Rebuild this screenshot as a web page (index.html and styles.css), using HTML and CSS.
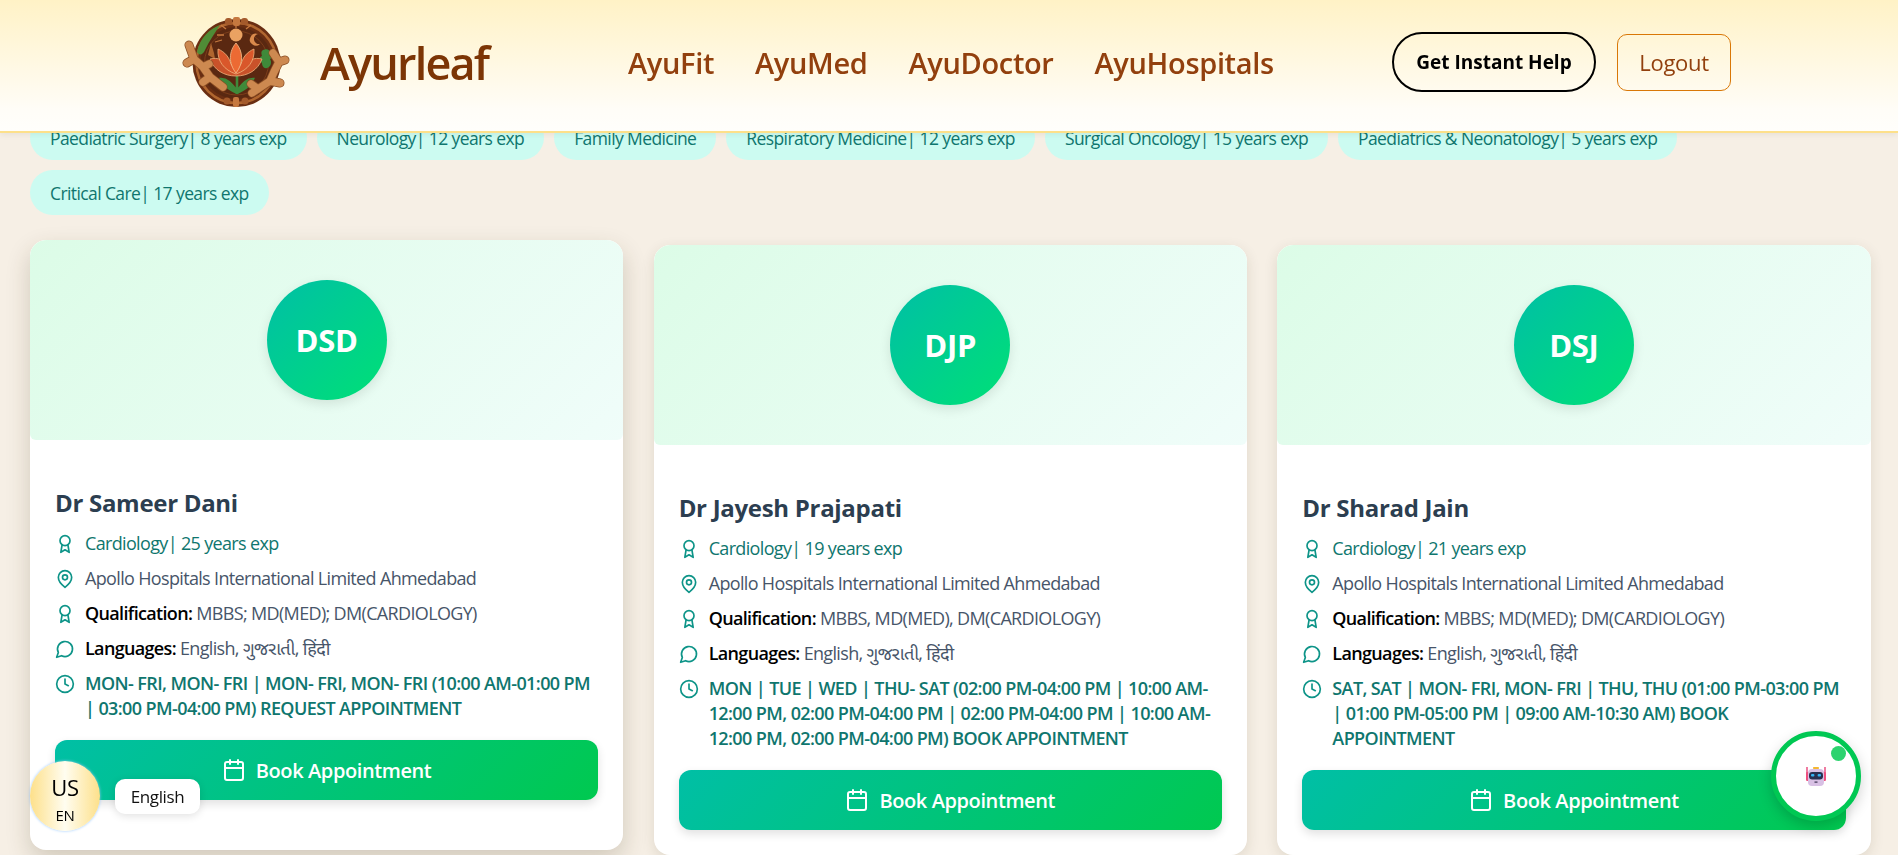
FILE: index.html
```html
<!DOCTYPE html>
<html lang="en">
<head>
<meta charset="utf-8">
<title>Ayurleaf</title>
<link rel="stylesheet" href="styles.css">
</head>
<body>
<header class="topbar">
  <div class="brand">
    <svg class="logo" viewBox="0 0 110 90" aria-hidden="true">
      <circle cx="54.5" cy="46" r="44" fill="#6a2e12"/>
      <circle cx="54.5" cy="46" r="40" fill="none" stroke="#b0662f" stroke-width="2.5"/>
      <circle cx="54.5" cy="46" r="36" fill="#5a2811"/>
      <circle cx="54.5" cy="46" r="32" fill="none" stroke="#7c3d1a" stroke-width="1"/>
      <rect x="43" y="1" width="7" height="7" rx="3" fill="#a45a2b"/>
      <rect x="59" y="1" width="7" height="7" rx="3" fill="#a45a2b"/>
      <rect x="51" y="0" width="7" height="9" rx="2" fill="#c5783f"/>
      <path d="M42 18h-7M44 12l-5-4M54 11V8M64 12l5-4M40 23l-7 2M68 23l3 1" stroke="#c5783f" stroke-width="1.3"/>
      <circle cx="54" cy="18" r="6.5" fill="#eaa262"/>
      <path d="M76 17a6 6 0 1 0 2 10a5 5 0 0 1-2-10z" fill="#d98a4c"/>
      <path d="M38 8C28 12 18 20 15 35C17 39 21 38 23 33C27 24 33 16 38 8Z" fill="#4f8c36"/>
      <path d="M26 38l3-12 3 10 1 6z" fill="#b0662f"/>
      <path d="M81 33c4-2 7 0 7 3c3 1 3 5 0 6c2 3 1 8-3 9c-3 1-5-2-5-5c-3-2-3-6 0-7c-1-3-1-5 1-6z" fill="#3f8a3a"/>
      <path d="M55 57V77M55 74C50 68 46 62 39 62C42 69 48 72 55 76M55 74C60 68 64 62 71 62C68 69 62 72 55 76" stroke="#3f8a3a" stroke-width="2.6" fill="#3f8a3a"/>
      <path d="M28 42C36 40 43 43 49 50C54 52 56 52 60 50C66 43 72 40 80 42C76 53 66 59 54 59C42 59 32 53 28 42Z" fill="#c9522a" stroke="#f0b27c" stroke-width=".8"/>
      <path d="M36 32C43 35 47 40 49 47L54 54L59 47C61 40 65 35 72 32C73 44 66 53 54 57C42 53 35 44 36 32Z" fill="#d9572b" stroke="#f0b27c" stroke-width=".8"/>
      <path d="M54 26C61 34 62 46 54 56C46 46 47 34 54 26Z" fill="#ec6a33" stroke="#f5c08e" stroke-width=".8"/>
      <path d="M7 28L12 42L21 50L28 60L41 70M21 50L27 47M12 42L5 46M28 60L21 65" stroke="#8a4e24" stroke-width="9" stroke-linecap="round" stroke-linejoin="round" fill="none"/>
      <path d="M7 28L12 42L21 50L28 60L41 70M21 50L27 47M12 42L5 46M28 60L21 65" stroke="#cd8950" stroke-width="7.5" stroke-linecap="round" stroke-linejoin="round" fill="none"/>
      <path d="M91 36L97 45L92 55L88 64L76 72M97 45L103 43M88 64L98 66M76 72L69 67M76 72L70 76" stroke="#8a4e24" stroke-width="9" stroke-linecap="round" stroke-linejoin="round" fill="none"/>
      <path d="M91 36L97 45L92 55L88 64L76 72M97 45L103 43M88 64L98 66M76 72L69 67M76 72L70 76" stroke="#cd8950" stroke-width="7.5" stroke-linecap="round" stroke-linejoin="round" fill="none"/>
      <circle cx="45" cy="84" r="3.5" fill="#a45a2b"/>
      <circle cx="63" cy="84" r="3.5" fill="#a45a2b"/>
      <rect x="51" y="80" width="6" height="10" rx="2" fill="#c5783f"/>
    </svg>
    <span class="brand-name">Ayurleaf</span>
  </div>
  <nav class="nav">
    <a class="nav-link">AyuFit</a>
    <a class="nav-link">AyuMed</a>
    <a class="nav-link">AyuDoctor</a>
    <a class="nav-link">AyuHospitals</a>
  </nav>
  <div class="actions">
    <button class="btn-help">Get Instant Help</button>
    <button class="btn-logout">Logout</button>
  </div>
</header>

<main class="page">
  <div class="chips">
    <span class="chip">Paediatric Surgery| 8 years exp</span>
    <span class="chip">Neurology| 12 years exp</span>
    <span class="chip">Family Medicine</span>
    <span class="chip">Respiratory Medicine| 12 years exp</span>
    <span class="chip">Surgical Oncology| 15 years exp</span>
    <span class="chip">Paediatrics &amp; Neonatology| 5 years exp</span>
    <span class="chip">Critical Care| 17 years exp</span>
  </div>

  <section class="cards">
    <article class="card card-raised">
      <div class="card-top"><div class="avatar">DSD</div></div>
      <div class="card-body">
        <h2 class="doc-name">Dr Sameer Dani</h2>
        <div class="row row-spec"><svg class="ico"><use href="#i-award"/></svg><span>Cardiology| 25 years exp</span></div>
        <div class="row"><svg class="ico"><use href="#i-pin"/></svg><span>Apollo Hospitals International Limited Ahmedabad</span></div>
        <div class="row"><svg class="ico"><use href="#i-award"/></svg><span><b>Qualification:</b> MBBS; MD(MED); DM(CARDIOLOGY)</span></div>
        <div class="row"><svg class="ico"><use href="#i-chat"/></svg><span><b>Languages:</b> English, ગુજરાતી, हिंदी</span></div>
        <div class="row row-time"><svg class="ico"><use href="#i-clock"/></svg><span>MON- FRI, MON- FRI | MON- FRI, MON- FRI (10:00 AM-01:00 PM | 03:00 PM-04:00 PM) REQUEST APPOINTMENT</span></div>
        <button class="book"><svg class="ico-cal"><use href="#i-cal"/></svg>Book Appointment</button>
      </div>
    </article>

    <article class="card">
      <div class="card-top"><div class="avatar">DJP</div></div>
      <div class="card-body">
        <h2 class="doc-name">Dr Jayesh Prajapati</h2>
        <div class="row row-spec"><svg class="ico"><use href="#i-award"/></svg><span>Cardiology| 19 years exp</span></div>
        <div class="row"><svg class="ico"><use href="#i-pin"/></svg><span>Apollo Hospitals International Limited Ahmedabad</span></div>
        <div class="row"><svg class="ico"><use href="#i-award"/></svg><span><b>Qualification:</b> MBBS, MD(MED), DM(CARDIOLOGY)</span></div>
        <div class="row"><svg class="ico"><use href="#i-chat"/></svg><span><b>Languages:</b> English, ગુજરાતી, हिंदी</span></div>
        <div class="row row-time"><svg class="ico"><use href="#i-clock"/></svg><span>MON | TUE | WED | THU- SAT (02:00 PM-04:00 PM | 10:00 AM-12:00 PM, 02:00 PM-04:00 PM | 02:00 PM-04:00 PM | 10:00 AM-12:00 PM, 02:00 PM-04:00 PM) BOOK APPOINTMENT</span></div>
        <button class="book"><svg class="ico-cal"><use href="#i-cal"/></svg>Book Appointment</button>
      </div>
    </article>

    <article class="card">
      <div class="card-top"><div class="avatar">DSJ</div></div>
      <div class="card-body">
        <h2 class="doc-name">Dr Sharad Jain</h2>
        <div class="row row-spec"><svg class="ico"><use href="#i-award"/></svg><span>Cardiology| 21 years exp</span></div>
        <div class="row"><svg class="ico"><use href="#i-pin"/></svg><span>Apollo Hospitals International Limited Ahmedabad</span></div>
        <div class="row"><svg class="ico"><use href="#i-award"/></svg><span><b>Qualification:</b> MBBS; MD(MED); DM(CARDIOLOGY)</span></div>
        <div class="row"><svg class="ico"><use href="#i-chat"/></svg><span><b>Languages:</b> English, ગુજરાતી, हिंदी</span></div>
        <div class="row row-time"><svg class="ico"><use href="#i-clock"/></svg><span>SAT, SAT | MON- FRI, MON- FRI | THU, THU (01:00 PM-03:00 PM | 01:00 PM-05:00 PM | 09:00 AM-10:30 AM) BOOK APPOINTMENT</span></div>
        <button class="book"><svg class="ico-cal"><use href="#i-cal"/></svg>Book Appointment</button>
      </div>
    </article>
  </section>
</main>

<div class="lang">
  <div class="lang-badge"><span class="lang-cc">US</span><span class="lang-code">EN</span></div>
  <div class="lang-tip">English</div>
</div>

<div class="bot">
  <span class="bot-dot"></span>
  <svg class="bot-face" viewBox="0 0 20 20" aria-hidden="true">
    <path d="M1 1v11M19 1v11" stroke="#e8457a" stroke-width="1.4"/>
    <rect x="0" y="6" width="3" height="9" rx="1.2" fill="#ee4f7f"/>
    <rect x="17" y="6" width="3" height="9" rx="1.2" fill="#ee4f7f"/>
    <rect x="7" y="1" width="6" height="2" rx=".8" fill="#f5b731"/>
    <rect x="2" y="3" width="16" height="17" rx="4" fill="#d8c0e4"/>
    <rect x="3" y="6" width="14" height="7.5" rx="3.2" fill="#27304f"/>
    <rect x="5" y="8" width="3.4" height="2.6" rx="1" fill="#35b4f2"/>
    <rect x="11.6" y="8" width="3.4" height="2.6" rx="1" fill="#35b4f2"/>
    <rect x="8.5" y="15.5" width="3" height="1.2" fill="#3a3350"/>
  </svg>
</div>

<svg class="sprite" aria-hidden="true">
  <defs>
    <symbol id="i-award" viewBox="0 0 24 24" fill="none" stroke="currentColor" stroke-width="2" stroke-linecap="round" stroke-linejoin="round">
      <circle cx="12" cy="8" r="6"/><path d="M15.48 12.89 17 22l-5-3-5 3 1.52-9.11"/>
    </symbol>
    <symbol id="i-pin" viewBox="0 0 24 24" fill="none" stroke="currentColor" stroke-width="2" stroke-linecap="round" stroke-linejoin="round">
      <path d="M20 10c0 6-8 12-8 12s-8-6-8-12a8 8 0 0 1 16 0Z"/><circle cx="12" cy="10" r="3"/>
    </symbol>
    <symbol id="i-chat" viewBox="0 0 24 24" fill="none" stroke="currentColor" stroke-width="2" stroke-linecap="round" stroke-linejoin="round">
      <path d="M7.9 20A9 9 0 1 0 4 16.1L2 22Z"/>
    </symbol>
    <symbol id="i-clock" viewBox="0 0 24 24" fill="none" stroke="currentColor" stroke-width="2" stroke-linecap="round" stroke-linejoin="round">
      <circle cx="12" cy="12" r="10"/><path d="M12 6v6l4 2"/>
    </symbol>
    <symbol id="i-cal" viewBox="0 0 24 24" fill="none" stroke="currentColor" stroke-width="2" stroke-linecap="round" stroke-linejoin="round">
      <path d="M8 2v4M16 2v4"/><rect x="3" y="4" width="18" height="18" rx="2"/><path d="M3 10h18"/>
    </symbol>
  </defs>
</svg>
</body>
</html>
```

FILE: styles.css
```css
* { box-sizing: border-box; }
html, body { margin: 0; height: 855px; overflow: hidden; }
body {
  background: #f6efe5;
  font-family: "Open Sans", "Noto Sans", "Noto Sans Gujarati", "Noto Sans Devanagari", sans-serif;
  color: #2c3e50;
}
.sprite { display: none; }

.topbar {
  position: fixed;
  top: 0; left: 0; right: 0;
  height: 133px;
  z-index: 10;
  display: flex;
  align-items: center;
  padding: 0 0 7px 182px;
  background: linear-gradient(180deg, #fff2c6 0%, #fffdf8 85%, #fffefb 100%);
  border-bottom: 2px solid #fde08a;
  box-shadow: 0 2px 6px rgba(0,0,0,.06);
}
.brand { display: flex; align-items: center; gap: 28px; width: 446px; }
.logo { width: 110px; height: 90px; flex: none; }
.brand-name { font-size: 45px; font-weight: 600; color: #7c3505; letter-spacing: -1.8px; }
.nav { display: flex; gap: 41px; width: 764px; }
.nav-link { font-size: 29px; font-weight: 600; color: #92400e; letter-spacing: -.35px; }
.actions { display: flex; align-items: center; gap: 21px; }
.btn-help {
  width: 204px; height: 60px;
  background: transparent;
  border: 2px solid #000;
  border-radius: 30px;
  font: 700 19px "Open Sans", sans-serif;
  color: #000;
}
.btn-logout {
  width: 114px; height: 57px;
  background: transparent;
  border: 1px solid #d97706;
  border-radius: 10px;
  font: 500 22px "Open Sans", sans-serif;
  letter-spacing: -.3px;
  color: #92400e;
}

.page { padding: 115px 27.5px 0 30px; }
.chips { display: flex; flex-wrap: wrap; gap: 10px; }
.chip {
  height: 45px;
  padding: 0 20px;
  display: flex; align-items: center;
  border-radius: 23px;
  background: #ccfbf1;
  color: #0f766e;
  font-size: 17.5px;
  letter-spacing: -.6px;
  white-space: nowrap;
}

.cards {
  margin-top: 30px;
  display: grid;
  grid-template-columns: repeat(3, 1fr);
  column-gap: 30.5px;
  align-items: start;
}
.card {
  height: 610px;
  background: #fff;
  border-radius: 16px;
  overflow: hidden;
  box-shadow: 0 4px 14px rgba(60,50,20,.12);
}
.card-raised { margin-top: -5px; box-shadow: 0 10px 24px rgba(60,50,20,.2); }
.card-top {
  height: 200px;
  display: flex; align-items: center; justify-content: center;
  border-radius: 16px 16px 6px 6px;
  background: linear-gradient(135deg, #dcfce7, #f0fdfa);
}
.avatar {
  width: 120px; height: 120px;
  border-radius: 50%;
  background: linear-gradient(135deg, #00bfa6, #00e076);
  color: #fff;
  display: flex; align-items: center; justify-content: center;
  font-size: 31px; font-weight: 700; letter-spacing: -.3px;
  box-shadow: 0 4px 12px rgba(0,0,0,.1);
}
.card-body { padding: 47px 25px 0; display: flex; flex-direction: column; }
.doc-name { margin: 0 0 12px; font-size: 24px; font-weight: 700; line-height: 32px; color: #2c3e50; letter-spacing: -.3px; }
.row {
  display: flex; gap: 10px; align-items: flex-start;
  font-size: 18px; line-height: 25px; letter-spacing: -.66px;
  color: #475569;
  margin-bottom: 10px;
}
.row b { color: #000; font-weight: 600; }
.row-spec { color: #0f766e; }
.row-time { color: #0f766e; font-weight: 600; letter-spacing: -.6px; margin-bottom: 0; }
.ico { width: 20px; height: 20px; flex: none; color: #0d9488; margin-top: 3px; }
.book {
  margin-top: 19px;
  height: 60px;
  border: 0;
  border-radius: 12px;
  background: linear-gradient(135deg, #00bfa6, #00c94f);
  color: #fff;
  font: 600 20px "Open Sans", sans-serif;
  letter-spacing: -.4px;
  display: flex; align-items: center; justify-content: center; gap: 10px;
  box-shadow: 0 4px 10px rgba(0,0,0,.12);
}
.ico-cal { width: 24px; height: 24px; }

.lang { position: fixed; left: 30px; bottom: 24px; display: flex; align-items: center; gap: 15px; z-index: 20; }
.lang-badge {
  width: 70px; height: 70px;
  border-radius: 50%;
  background: linear-gradient(90deg, #fde08a, #fffdf0 50%, #fde08a);
  box-shadow: 0 0 3px #93c5fd;
  display: flex; flex-direction: column; align-items: center; justify-content: center;
  color: #000;
}
.lang-cc { font-size: 22px; font-weight: 500; line-height: 28px; margin-top: 6px; letter-spacing: -.3px; }
.lang-code { font-size: 15px; font-weight: 500; line-height: 22px; margin-top: 3px; letter-spacing: -.3px; }
.lang-tip {
  width: 85px; height: 35px;
  background: #fff;
  border-radius: 10px;
  display: flex; align-items: center; justify-content: center;
  font-size: 17px; letter-spacing: -.4px; color: #111;
  box-shadow: 0 2px 8px rgba(0,0,0,.12);
}

.bot {
  position: fixed; right: 37px; bottom: 34px;
  width: 90px; height: 90px;
  border-radius: 50%;
  background: #fff;
  border: 5px solid #00c853;
  display: flex; align-items: center; justify-content: center;
  box-shadow: 0 5px 14px rgba(0,0,0,.18);
  z-index: 20;
}
.bot-dot { position: absolute; top: 10px; right: 10px; width: 15px; height: 15px; border-radius: 50%; background: #2dd36f; }
.bot-face { width: 20px; height: 20px; }
```
